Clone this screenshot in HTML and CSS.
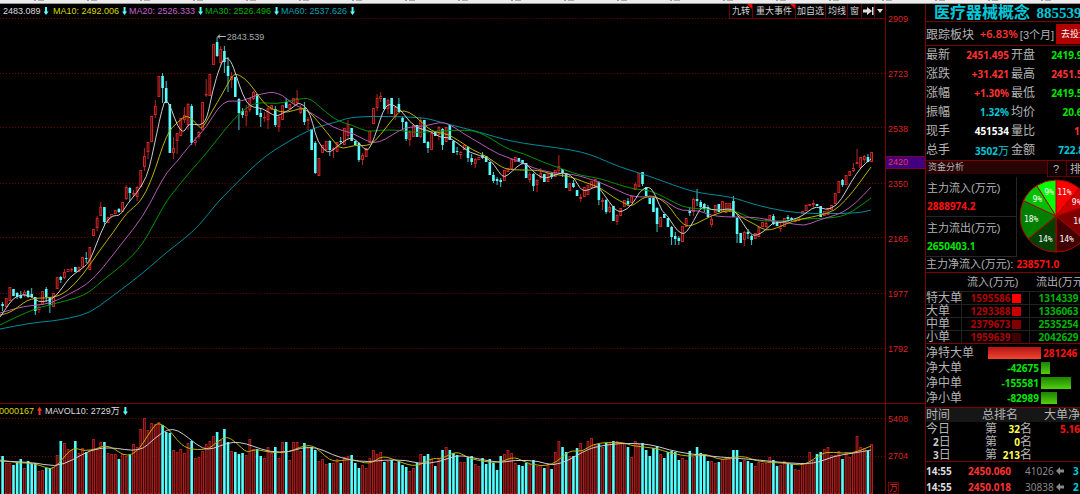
FILE: index.html
```html
<!DOCTYPE html>
<html lang="zh-CN">
<head>
<meta charset="utf-8">
<title>医疗器械概念 885539</title>
<link rel="stylesheet" href="styles.css">
</head>
<body>
<div class="strip"></div>
<main class="app">
  <section class="charts">
    <div class="pane price-pane">
      <header class="legend">
        <span class="ma first white">2483.089<i class="arr"></i></span>
        <span class="ma yellow">MA10: 2492.006<i class="arr"></i></span>
        <span class="ma violet">MA20: 2526.333<i class="arr"></i></span>
        <span class="ma green">MA30: 2526.496<i class="arr"></i></span>
        <span class="ma teal">MA60: 2537.626<i class="arr"></i></span>
        <nav class="tools">
          <button class="hot">九转</button><button class="hot">重大事件</button><button>加自选</button><button>均线</button><button>窗</button><button aria-label="移至最新"><svg width="12" height="10" viewBox="0 0 12 10"><path d="M1 3.600h4V1l5 4-5 4V6.400H1zM10 1h1.500v8H10z" fill="#ddd"/></svg></button><button aria-label="更多"><svg width="6" height="4" viewBox="0 0 6 4"><path d="M0 0h6L3 4z" fill="#ddd"/></svg></button>
        </nav>
      </header>
      <svg id="price" class="price" viewBox="0 17 886 386" preserveAspectRatio="none"></svg>
    </div>
    <div class="axis price-axis">
      <span>2909</span><span>2723</span><span>2538</span><span>2350</span><span>2165</span><span>1977</span><span>1792</span>
      <b class="tag">2420</b>
    </div>
    <div class="pane volume-pane">
      <header class="legend">
        <span class="vol yellow">0000167<i class="arr up"></i></span>
        <span class="white">MAVOL10: 2729万<i class="arr"></i></span>
      </header>
      <svg id="volume" class="volume" viewBox="0 417 886 77" preserveAspectRatio="none"></svg>
    </div>
    <div class="axis volume-axis"><span>5408</span><span>2704</span><em>万</em></div>
  </section>

  <aside class="side">
    <h1>医疗器械概念 <small>885539</small></h1>
    <div class="track"><span>跟踪板块</span><b class="up-c">+6.83%</b><span class="period">[3个月]</span><button>去投资</button></div>
    <dl class="quote">
      <dt>最新</dt><dd class="up-c">2451.495</dd><dt>开盘</dt><dd class="dn-c">2419.943</dd>
      <dt>涨跌</dt><dd class="up-c">+31.421</dd><dt>最高</dt><dd class="up-c">2451.505</dd>
      <dt>涨幅</dt><dd class="up-c">+1.30%</dd><dt>最低</dt><dd class="dn-c">2419.563</dd>
      <dt>振幅</dt><dd class="cy-c">1.32%</dd><dt>均价</dt><dd class="dn-c">20.640</dd>
      <dt>现手</dt><dd class="wh-c">451534</dd><dt>量比</dt><dd class="up-c">1.14</dd>
      <dt>总手</dt><dd class="cy-c">3502<span>万</span></dd><dt>金额</dt><dd class="cy-c">722.8亿</dd>
    </dl>
    <div class="fund-head"><h2>资金分析</h2><button>?</button><button>排名</button></div>
    <div class="fund">
      <div class="flows">
        <div><span>主力流入(万元)</span><b class="in-c">2888974.2</b></div>
        <div><span>主力流出(万元)</span><b class="dn-c">2650403.1</b></div>
      </div>
      <svg id="pie" class="pie" width="74" height="74" viewBox="-37 -37 74 74"></svg>
    </div>
    <div class="net-total"><span>主力净流入(万元):</span><b class="in-c">238571.0</b></div>
    <table class="orders">
      <thead><tr><th></th><th>流入(万元)</th><th>流出(万元)</th></tr></thead>
      <tbody>
        <tr><th>特大单</th><td>1595586<i class="q1"></i></td><td>1314339</td></tr>
        <tr><th>大单</th><td>1293388<i class="q2"></i></td><td>1336063</td></tr>
        <tr><th>中单</th><td>2379673<i class="q3"></i></td><td>2535254</td></tr>
        <tr><th>小单</th><td>1959639<i class="q4"></i></td><td>2042629</td></tr>
      </tbody>
    </table>
    <div class="nets">
      <div class="net pos"><span>净特大单</span><i style="width:53px"></i><b>281246</b></div>
      <div class="net"><span>净大单</span><b>-42675</b><i style="width:9px"></i></div>
      <div class="net"><span>净中单</span><b>-155581</b><i style="width:30px"></i></div>
      <div class="net"><span>净小单</span><b>-82989</b><i style="width:16px"></i></div>
    </div>
    <table class="rank">
      <thead><tr><th>时间</th><th>总排名</th><th></th><th>大单净量</th></tr></thead>
      <tbody>
        <tr><th>今日</th><td>第</td><td><b>32</b>名</td><td class="in-c"><b>5.16</b></td></tr>
        <tr><th><b>2</b>日</th><td>第</td><td><b>0</b>名</td><td></td></tr>
        <tr><th><b>3</b>日</th><td>第</td><td><b>213</b>名</td><td></td></tr>
      </tbody>
    </table>
    <div class="ticks">
      <div><time>14:55</time><b class="up-c">2450.060</b><span>41026</span><svg width="8" height="8" viewBox="0 0 8 8"><path d="M4 0v2.500h4v3H4V8L0 4z" fill="#888"/></svg><b class="cy-c">3</b></div>
      <div><time>14:55</time><b class="up-c">2450.018</b><span>30838</span><svg width="8" height="8" viewBox="0 0 8 8"><path d="M4 0v2.500h4v3H4V8L0 4z" fill="#888"/></svg><b class="cy-c">2</b></div>
    </div>
  </aside>
</main>
<script src="chart.js"></script>
</body>
</html>
```

FILE: styles.css
```css
* { box-sizing: border-box; }
body {
  margin: 0;
  background: #000;
  color: #b4b4b4;
  font-family: "Liberation Sans", "Noto Sans CJK SC", sans-serif;
  font-size: 12px;
  overflow: hidden;
}
button { font-family: inherit; margin: 0; padding: 0; background: none; border: 0; color: inherit; }
h1, h2, dl, dd { margin: 0; }
table { border-collapse: collapse; }
th, td { padding: 0; font-weight: 400; text-align: left; }
i, em { font-style: normal; }
b, dd, time { font-family: "Noto Sans", "Noto Sans CJK SC", sans-serif; font-size: 10px; font-weight: 700; }

.strip {
  height: 4px;
  background:
    repeating-linear-gradient(90deg, transparent 0 34px, #999 34px 36px, transparent 36px 38px, #aaa 38px 44px, transparent 44px 53px) 0 0 / 100% 1px no-repeat,
    #ececec;
  border-bottom: 1px solid #999;
}
.app { display: flex; height: calc(100vh - 4px); }

/* charts */
.charts { flex: 1; min-width: 0; display: grid; grid-template-columns: 1fr 39px; grid-template-rows: 399px 1fr; }
.pane { min-width: 0; border-right: 1px solid #7c0000; }
.pane svg { display: block; width: 100%; }
.volume-pane, .volume-axis { border-top: 1px solid #7c0000; }
.legend { display: flex; height: 13px; line-height: 14px; font-size: 9px; white-space: nowrap; }
.price { height: 386px; }
.volume { height: 77px; }
.ma { width: 76px; flex: none; }
.ma.first { width: 53px; padding-left: 3px; }
.vol { width: 46px; margin-left: -1px; }
.white { color: #ddd; }
.yellow { color: #d8d800; }
.violet { color: #c763c7; }
.green { color: #00b400; }
.teal { color: #00a0b0; }
.arr { display: inline-block; width: 5px; height: 8px; margin-left: 3px; background: #54ffff; vertical-align: -1px; clip-path: polygon(30% 0, 70% 0, 70% 55%, 100% 55%, 50% 100%, 0 55%, 30% 55%); }
.arr.up { background: #ff3232; clip-path: polygon(50% 0, 100% 45%, 70% 45%, 70% 100%, 30% 100%, 30% 45%, 0 45%); }
.tools { margin-left: auto; display: flex; height: 15px; border-bottom: 1px solid #6a0000; }
.tools button { font-size: 9px; line-height: 14px; padding: 0 2px; color: #d0d0d0; border-left: 1px solid #6a0000; display: flex; align-items: center; }
.tools button:nth-child(2) { padding: 0 3px; }
.tools button:nth-child(3) { padding: 0 1px; }
.tools button:nth-child(4) { padding: 0 1px 0 2px; }
.tools button:nth-child(6) { padding: 0; }
.tools .hot { background: linear-gradient(225deg, #f00 3px, transparent 4px); }
.axis { position: relative; color: #d22; font-size: 9px; padding-left: 2px; }
.axis span, .axis em { display: block; }
.price-axis { padding-top: 9px; line-height: 12px; }
.price-axis span { height: 55px; }
.tag { position: absolute; left: 0; right: 0; top: 152px; height: 13px; padding-left: 2px; background: #420080; border: 1px solid #7c0040; border-width: 1px 0; font: 9px/11px "Liberation Sans", sans-serif; color: #e33a4a; }
.volume-axis { padding-top: 9px; line-height: 12px; }
.volume-axis span { height: 37px; }
.volume-axis em { width: 11px; height: 12px; border: 1px solid #7c0000; margin-top: -5px; line-height: 10px; }

.grid { stroke: #750000; stroke-width: 1; stroke-dasharray: 1 2; }
.rise { fill: #300404; stroke: #d32626; stroke-width: 1; }
.rise-wick { stroke: #c02222; stroke-width: 1; }
.fall { fill: #54ffff; }
.fall-wick { stroke: #46c8c8; stroke-width: 1; }
.vrise { fill: #3a0505; stroke: #b42020; stroke-width: 1; }
.line { fill: none; stroke-width: 1; stroke-linejoin: round; }
.l-white { stroke: #ccc; }
.l-yellow { stroke: #bcb400; }
.l-violet { stroke: #b45ab4; }
.l-green { stroke: #009600; }
.l-teal { stroke: #008c9c; }
.peak { fill: #aaa; font-size: 9px; }
.peak-arrow { fill: none; stroke: #bbb; }

/* quote panel */
.side { flex: none; width: 155px; overflow: hidden; border-left: 1px solid #7c0000; white-space: nowrap; }
.up-c { color: #ff3232; }
.dn-c { color: #00e600; }
.cy-c { color: #00c8d8; }
.wh-c { color: #fff; }
.in-c { color: #ff1010; }
h1 { height: 18px; padding-left: 8px; font-size: 16px; line-height: 17px; color: #00c8d8; border-bottom: 1px solid #7c0000; }
h1 small { margin-left: 2px; font: 700 15px "Liberation Serif", serif; }
.track { display: flex; align-items: center; height: 24px; border-bottom: 1px solid #7c0000; }
.track b { margin-left: 6px; font-size: 11px; font-weight: 600; }
.track .period { margin-left: 2px; font-size: 11px; }
.track button { flex: none; width: 50px; height: 20px; margin-left: 2px; padding-left: 5px; background: #b00000; color: #fff; font-size: 9px; text-align: left; }
.quote { display: grid; grid-template-columns: 26px 57px 26px 59px; grid-auto-rows: 19px; line-height: 19px; border-bottom: 1px solid #7c0000; }
.quote dd { text-align: right; }
.quote dt:nth-of-type(even) { padding-left: 2px; }
.quote dd span { font-weight: 400; font-size: 11px; }
.fund-head { display: flex; height: 16px; background: linear-gradient(#280404 13px, #000 13px); }
h2 { flex: 1; padding-left: 2px; font-size: 9px; font-weight: 400; line-height: 13px; }
.fund-head button { flex: none; width: 19px; height: 16px; border: 1px solid #600000; border-width: 0 0 1px 1px; background: #100; font-size: 11px; padding-left: 5px; text-align: left; line-height: 16px; overflow: hidden; }
.fund-head button:last-child { width: 14px; padding-left: 3px; }
.fund { display: flex; height: 80px; }
.flows { flex: none; width: 91px; border-right: 1px solid #262626; }
.flows div { height: 40px; padding: 2px 0 0 1px; border-bottom: 1px solid #262626; font-size: 11px; line-height: 18px; }
.flows b { display: block; }
.pie { flex: none; margin: 2px 0 0 2px; }
.pie path { stroke: #b00000; stroke-width: 1; }
.pie text { fill: #fff; font: 8px "DejaVu Sans Mono", monospace; text-anchor: middle; }
.net-total { height: 16px; line-height: 15px; font-size: 11px; border-bottom: 1px solid #7c0000; }
.net-total b { margin-left: 3px; }
.orders { table-layout: fixed; width: 170px; border-bottom: 1px solid #7c0000; line-height: 12px; }
.orders th:nth-child(1) { width: 35px; }
.orders th:nth-child(2) { width: 68px; padding-left: 6px; }
.orders thead th { height: 18px; font-size: 11px; }
.orders thead th:nth-child(3) { padding-left: 7px; }
.orders tbody tr { height: 13px; border-top: 1px solid #222; }
.orders td { padding-left: 9px; border-left: 1px solid #222; color: #00b400; font: 700 10px/12px "Noto Sans", sans-serif; }
.orders td:nth-child(2) { color: #b00000; }
.orders tbody th { line-height: 12px; }
.orders i { display: inline-block; width: 9px; height: 9px; margin-left: 1px; vertical-align: -1px; }
.q1 { background: #f00; }
.q2 { background: #c80000; }
.q3 { background: #800000; }
.q4 { background: #400000; }
.nets { height: 63px; padding-top: 2px; }
.net { display: flex; align-items: center; height: 15px; line-height: 15px; }
.net span { flex: none; width: 48px; }
.net b { flex: none; width: 66px; padding-right: 1px; text-align: right; color: #00e600; }
.net i { flex: none; margin-left: 1px; height: 12px; background: linear-gradient(#1e8200, #50d010); }
.net.pos span { width: 62px; }
.net.pos b { width: auto; margin-left: 2px; color: #ff1010; }
.net.pos i { margin-left: 0; background: linear-gradient(#b41414, #f04632); }
.rank { table-layout: fixed; width: 170px; border-top: 1px solid #7c0000; line-height: 12px; }
.rank thead { background: #161616; }
.rank thead th { height: 15px; line-height: 14px; }
.rank th:nth-child(1) { width: 56px; }
.rank th:nth-child(2) { width: 17px; }
.rank th:nth-child(3) { width: 45px; }
.rank tbody tr { height: 13px; }
.rank tbody th b { padding-left: 7px; color: #ccc; }
.rank td:nth-child(2) { padding-left: 3px; }
.rank td:nth-child(3) { padding-right: 12px; text-align: right; }
.rank td:nth-child(3) b { color: #ffff50; }
.rank td:nth-child(4) { padding-left: 16px; }
.ticks { border-top: 1px solid #7c0000; padding-top: 1px; }
.ticks div { display: flex; align-items: center; height: 16px; line-height: 16px; }
.ticks div > * { flex: none; }
.ticks time { width: 42px; color: #ddd; }
.ticks b { width: 45px; }
.ticks span { width: 30px; margin-left: 12px; color: #888; font: 10px/16px "Noto Sans", sans-serif; }
.ticks svg { margin-left: 1px; }
.ticks b:last-child { margin-left: 9px; width: 8px; }
```

FILE: chart.js
```js
const NS = 'http://www.w3.org/2000/svg';
const STEP = 3.64;
const X0 = 2.6;

// each candle: direction, body top, body bottom, optional wick top and bottom
const candles = `c304-306,302-311 r298-307 r287-301 c289-296 c293-297,292-299 c295-298,291-299 r292-295,290-297 c291-297,290-298 c294-297,288-298 c297-311,297-315
r307-310,305-313 r291-305 c289-297,287-302 c297-305,297-313 r293-307 r277-289 c277-280,276-283 r272-278,269-279 r269-272 r269-270,268-272
c267-272 r267-272 r257-267 c258-259,252-263 r247-270 r229-236 r218-228,216-231 r207-216,202-216 c207-222,207-225 r217-223
r214-217 r210-214 c209-212,208-213 r202-212 r187-199,185-200 c188-193,187-201 r193-194,190-197 r187-197,186-201 r170-187 r156-167,148-171
r142-152,142-159 r116-142 r106-115,100-118 r76-97 c76-88,73-103 c88-103,81-103 c104-153 r148-153,137-159 r133-141,133-154 r118-136
r115-120,107-123 r104-125,103-130 c106-143,104-145 r140-143,137-146 r132-137,131-139 r102-130 r94-95,79-97 r74-96 r44-65 c42-56,37-57
r49-63,46-65 c51-62,46-73 c66-76,57-92 r76-80,72-88 c77-97 c99-113,98-130 c111-115,108-118 r111-116,105-126 r98-110,98-112 r92-99,91-100
c94-115 c113-117,108-127 r117-118,112-122 r108-120,107-129 r105-110 c109-125,106-127 r117-127,115-132 r105-120 c102-108,98-108 r104-109
r98-104 r98-103,90-105 r108-113,105-114 c108-122,102-125 r119-121,117-130 c129-150 c143-173,141-174 r158-176 r145-153 r141-150
c141-150,140-156 r148-150,147-158 r142-152 c141-142,137-144 r128-145 r124-136,120-140 c128-141 c141-145 c143-160,142-162 r155-160,153-165
r148-157 r131-143 r108-124 r98-108,94-111 r96-99,92-102 c98-109 r100-109,99-114 c98-114 r107-117,106-120 c104-112,98-112
c118-122,117-130 c122-139,121-141 r132-140,130-146 r125-137 c125-137 r120-137,117-138 c120-143 c142-148,141-153 r133-150 c132-136
r127-135,126-140 c129-145,128-150 r127-142 c125-140 c141-153 c151-152,147-155 r152-155,151-159 r145-150 c147-158,146-162 c158-162,154-165
r159-164,158-168 r157-160 c155-158,152-159 c156-162 c162-175 c175-181,172-183 c179-181,177-185 c180-182,178-187 r170-181 r168-172
r159-169 r157-162 c158-162 c160-164 c163-178 r174-180,172-183 c174-186,173-191 r180-185,179-192 r173-178,168-179 c174-182
r173-182 c173-177,172-179 r170-177 r166-171,155-173 c169-173,169-177 c173-188 r183-191 c183-187,180-188 c190-196 r197-199,194-202
r187-197 r185-195 r181-188 r179-188 c182-200,181-205 r200-202,198-210 c200-212,199-214 r207-212,203-213 c206-221 r215-222,214-225
r208-216 r200-207 c201-204,198-206 r196-203 r184-190,182-190 r173-187 c172-184,172-186 c187-196 c198-204 c198-212
c208-224,207-232 r217-227 c214-218 c218-227 c227-237,226-245 c236-239,232-245 c238-241,236-245 r226-242 r218-227 c211-213,207-216
r199-212,198-216 c199-201,189-206 c202-207,200-209 c204-209,203-212 c207-217,205-218 r219-225,216-227 r205-213 c204-212 r201-212 r203-213
r203-212 c201-217,196-217 c218-234,217-243 c233-243 r232-240,231-246 c232-234,229-239 c236-240,235-245 r233-239 r227-237 r222-227
r223-227,218-228 r215-220 c216-224,214-225 c222-226 r226-229,222-232 r218-227 c217-219,215-222 c218-220,217-221 r220-222 r217-221
r211-214 r205-211 r204-206 r203-205,200-208 c204-206 c206-217 r211-216 r208-215 r205-210 r193-204
r181-193 c180-185,179-187 r175-185 r171-176 r168-171,163-172 r162-164,149-164 r157-168 r156-160,155-163 c157-162,154-162 r152-162`
  .split(/\s+/).map(s => ({ up: s[0] === 'r', v: s.slice(1).split(/[-,]/).map(Number) }));

const volumes = `456 463 463 465 462 459 468 461 464 463 471 470 468 468 467 455 441 443 449 450 441 453 448 452 450 439 449 442 442 453 454 454 459 454 456 455 444 447 429 418
430 423 424 422 425 432 433 450 452 449 453 443 441 458 457 451 444 441 436 432 440 429 442 451 452 454 453 455 439 449 449 456 458 447 453 447 458 442 442 460 442 442
451 443 448 447 450 461 459 464 463 463 459 463 457 456 455 463 468 465 468 458 450 454 452 462 461 460 463 461 465 467 471 468 463 454 456 454 459 466 459 450 447 450 453 455 462
462 457 456 464 466 458 464 459 463 470 456 454 450 453 463 465 466 463 464 460 466 465 468 464 469 452 441 447 452 456 456 448 443 451 441 438 444 444
447 443 442 441 441 442 443 447 457 441 444 443 450 456 448 446 454 458 452 451 452 460 458 460 451 457 447 453 455 461 461 463 462 459 458 459 450 450 462 460
461 463 466 462 463 463 457 460 466 465 461 463 464 469 470 463 464 452 460 454 452 449 447 455 455 451 459 452 457 452 436 447 448 451 444`.split(/\s+/).map(Number);

const priceLines = {
  teal: '0,329 30,323 53,321 70,318 90,313 110,298 133,281 150,267 167,252 183,240 200,225 217,203 233,187 250,170 267,155 283,145 300,135 317,127 337,122 355,116 423,117 440,122 480,132 513,142 560,148 583,152 600,158 620,167 650,176 682,188 700,193 733,197 753,204 787,212 820,214 860,213 872,210',
  green: '0,325 30,310 53,304 77,298 90,292 103,280 123,265 143,245 165,203 177,188 190,172 207,153 227,127 243,110 257,102 277,104 290,101 300,99 308,98 315,102 327,113 340,122 353,125 367,132 380,130 400,130 417,133 437,131 467,130 480,132 497,142 510,150 523,153 543,162 563,169 583,176 600,178 632,189 650,190 667,198 683,207 700,209 733,210 745,215 758,221 787,221 800,219 838,218 853,212 872,198',
  violet: '0,313 20,307 37,305 52,303 67,295 87,285 103,268 123,242 143,217 157,190 167,172 177,162 190,145 207,127 218,108 228,100 240,102 257,95 267,93 273,92 283,95 293,104 300,107 312,113 328,124 340,130 353,133 367,141 375,143 385,140 400,130 410,127 427,126 440,122 450,124 463,133 480,143 500,155 517,160 533,168 553,173 573,174 587,178 600,182 620,191 633,197 660,197 672,205 682,211 700,210 715,217 757,217 773,221 790,223 805,226 817,221 830,217 843,213 857,203 872,187',
  yellow: '0,315 7,314 17,308 30,298 53,298 67,292 83,275 100,250 113,233 127,212 140,203 152,180 167,133 178,122 188,114 200,128 203,128 213,110 222,95 230,80 235,73 245,78 255,90 263,102 273,110 288,113 300,108 308,110 317,120 327,132 337,145 343,149 355,145 367,146 375,142 387,127 398,113 404,110 415,115 430,130 440,133 448,134 460,141 473,150 487,156 503,168 513,170 540,170 550,174 570,176 587,183 600,187 615,198 625,203 632,207 643,198 653,195 668,203 677,217 687,227 697,224 713,215 733,209 743,218 757,225 767,231 778,228 793,221 813,217 830,213 840,207 853,193 872,167',
  white: '0,317 5,310 13,298 23,294 33,297 38,302 48,301 55,297 63,287 70,277 80,270 89,263 97,243 105,223 113,215 120,216 128,203 137,193 147,177 152,157 157,133 162,110 166,98 172,110 178,127 184,133 189,123 200,126 207,120 213,90 220,67 225,57 231,60 237,77 243,95 250,107 263,108 276,117 283,113 290,110 297,104 300,103 308,108 313,123 318,142 328,154 337,147 350,137 357,140 367,152 372,145 378,128 383,112 389,103 400,108 410,122 420,129 428,130 437,135 443,138 448,137 457,142 470,153 490,158 500,173 505,178 513,171 522,163 527,164 537,175 547,179 560,173 567,173 575,178 582,191 590,190 597,186 600,188 610,202 617,211 623,212 633,205 640,192 647,187 652,188 657,197 663,212 668,215 675,227 682,234 687,233 695,220 700,210 705,206 712,210 723,210 733,208 740,217 748,230 755,237 767,230 773,223 780,223 800,218 808,212 817,206 827,210 835,207 842,200 852,182 862,167 872,159'
};
const volumeLines = {
  yellow: '0,460 17,463 33,463 47,468 53,469 62,460 70,450 77,448 83,451 97,449 105,445 115,449 123,455 132,455 140,448 147,437 155,425 159,423 168,428 177,440 187,449 208,450 217,442 227,436 237,443 247,453 255,449 273,453 290,452 300,447 310,445 317,448 333,463 350,458 370,465 383,455 400,462 417,467 432,458 442,459 457,451 467,457 480,461 500,463 515,456 530,465 553,466 570,450 583,452 595,443 623,442 633,446 657,448 670,453 693,457 705,453 723,461 742,455 760,462 787,463 805,466 823,453 833,452 853,454 872,446',
  white: '0,461 33,462 55,467 73,460 90,450 110,447 140,452 155,438 168,429 178,430 190,439 203,449 213,449 227,443 240,442 253,446 270,452 290,452 300,448 317,447 333,455 350,460 370,462 383,460 407,460 420,464 440,462 457,455 470,457 500,463 515,460 540,461 553,466 570,460 583,452 595,447 620,443 650,444 670,450 690,454 720,457 760,460 787,463 815,464 835,456 855,453 872,450'
};

function add(parent, tag, attrs, text) {
  const el = document.createElementNS(NS, tag);
  for (const k in attrs) el.setAttribute(k, attrs[k]);
  if (text) el.textContent = text;
  parent.appendChild(el);
  return el;
}
const gridLine = (svg, y) => add(svg, 'line', { x1: 0, x2: 886, y1: y + 0.5, y2: y + 0.5, class: 'grid' });
// rounds every corner of a polyline with a quadratic curve through the midpoints
function smooth(pts) {
  const p = pts.split(' ').map(s => s.split(',').map(Number));
  let d = `M${p[0]}`;
  for (let i = 1; i < p.length - 1; i++) {
    d += `Q${p[i]} ${(p[i][0] + p[i + 1][0]) / 2},${(p[i][1] + p[i + 1][1]) / 2}`;
  }
  return d + `L${p[p.length - 1]}`;
}
function lines(svg, set) {
  for (const k in set) add(svg, 'path', { d: smooth(set[k]), class: 'line l-' + k });
}

const price = document.getElementById('price');
[18, 73, 127, 183, 237, 293, 348].forEach(y => gridLine(price, y));
candles.forEach((c, i) => {
  const x = X0 + i * STEP;
  const [t, b, hi = t, lo = b] = c.v;
  const cls = c.up ? 'rise' : 'fall';
  if (c.up) {
    if (hi < t) add(price, 'line', { x1: x, x2: x, y1: hi, y2: t, class: 'rise-wick' });
    if (lo > b) add(price, 'line', { x1: x, x2: x, y1: b, y2: lo, class: 'rise-wick' });
    add(price, 'rect', { x: x - 0.9, y: t + 0.5, width: 1.8, height: Math.max(0.5, b - t - 1), class: cls });
  } else {
    add(price, 'line', { x1: x, x2: x, y1: hi, y2: lo, class: 'fall-wick' });
    add(price, 'rect', { x: x - 1.3, y: t, width: 2.6, height: b - t, class: cls });
  }
});
lines(price, priceLines);
add(price, 'path', { d: 'M226 36.500H218M220.500 34.500L218 36.500L220.500 38.500', class: 'peak-arrow' });
add(price, 'text', { x: 227, y: 40, class: 'peak' }, '2843.539');

const volume = document.getElementById('volume');
[418, 456].forEach(y => gridLine(volume, y));
volumes.forEach((y, i) => {
  const x = X0 + i * STEP;
  if (candles[i].up) add(volume, 'rect', { x: x - 0.9, y: y + 0.5, width: 1.8, height: 493 - y, class: 'vrise' });
  else add(volume, 'rect', { x: x - 1.3, y, width: 2.6, height: 494 - y, class: 'fall' });
});
lines(volume, volumeLines);

const pie = document.getElementById('pie');
const slices = [[11, '#ff0000'], [9, '#cc0000'], [16, '#800000'], [14, '#400000'], [14, '#004000'], [18, '#008000'], [9, '#00c000'], [9, '#00ff00']];
let sum = 0;
const at = (p, r) => [r * Math.sin(p * Math.PI / 50), -r * Math.cos(p * Math.PI / 50)];
const labels = slices.map(([n, color]) => {
  add(pie, 'path', { d: `M0 0L${at(sum, 36)}A36 36 0 0 1 ${at(sum + n, 36)}Z`, fill: color });
  const mid = at(sum + n / 2, 25);
  sum += n;
  return [mid, n + '%'];
});
labels.forEach(([[x, y], t]) => add(pie, 'text', { x, y: y + 3 }, t));
```
